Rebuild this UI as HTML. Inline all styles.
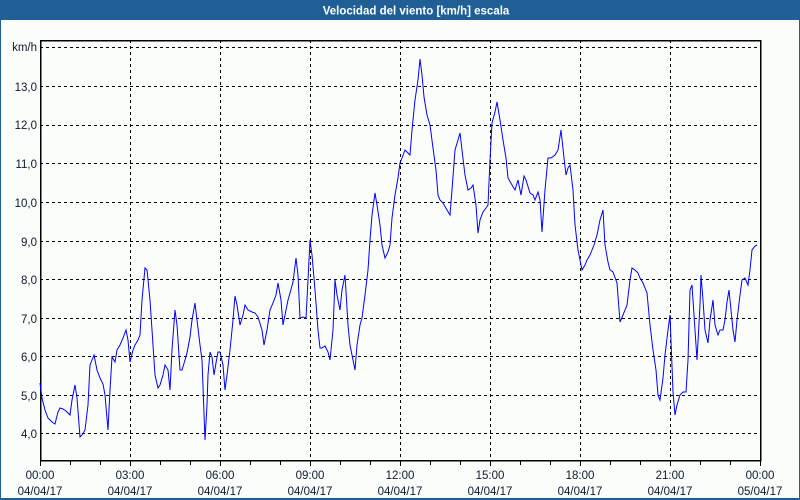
<!DOCTYPE html>
<html><head><meta charset="utf-8"><style>
html,body{margin:0;padding:0;width:800px;height:500px;overflow:hidden;background:#fbfdfb}
svg{display:block}
text{font-family:"Liberation Sans","DejaVu Sans",sans-serif;font-size:11.5px;fill:#101830}
</style></head><body>
<svg width="800" height="500" viewBox="0 0 800 500" xmlns="http://www.w3.org/2000/svg">
<rect x="0" y="0" width="800" height="500" fill="#fbfdfb"/>
<rect x="0" y="0" width="800" height="20" fill="#1f5f96"/>
<rect x="0" y="0" width="1" height="500" fill="#1f5f96"/>
<rect x="799" y="0" width="1" height="500" fill="#1f5f96"/>
<rect x="0" y="498" width="800" height="2" fill="#1f5f96"/>
<text x="416" y="14.5" text-anchor="middle" style="fill:#fff;font-weight:bold;font-size:11.5px">Velocidad del viento [km/h] escala</text>
<g stroke="#000" stroke-width="1" stroke-dasharray="3,3" fill="none" shape-rendering="crispEdges">
<path d="M40 47.5H760M40 86.5H760M40 125.5H760M40 163.5H760M40 202.5H760M40 241.5H760M40 279.5H760M40 318.5H760M40 356.5H760M40 395.5H760M40 433.5H760"/>
<path d="M130.5 40V460M220.5 40V460M310.5 40V460M400.5 40V460M490.5 40V460M580.5 40V460M670.5 40V460"/>
</g>
<g stroke="#000" stroke-width="1" fill="none" shape-rendering="crispEdges">
<path d="M40.5 40.5H760.5V460.5H40.5Z" stroke-width="1.5"/>
<path d="M40.5 460V466M70.5 460V465M100.5 460V465M130.5 460V466M160.5 460V465M190.5 460V465M220.5 460V466M250.5 460V465M280.5 460V465M310.5 460V466M340.5 460V465M370.5 460V465M400.5 460V466M430.5 460V465M460.5 460V465M490.5 460V466M520.5 460V465M550.5 460V465M580.5 460V466M610.5 460V465M640.5 460V465M670.5 460V466M700.5 460V465M730.5 460V465M760.5 460V466"/>
</g>
<g text-anchor="end">
<text x="37" y="51">km/h</text>
<text x="37" y="91">13,0</text><text x="37" y="129">12,0</text><text x="37" y="168">11,0</text>
<text x="37" y="207">10,0</text><text x="37" y="246">9,0</text><text x="37" y="284">8,0</text>
<text x="37" y="323">7,0</text><text x="37" y="361">6,0</text><text x="37" y="400">5,0</text><text x="37" y="438">4,0</text>
</g>
<g text-anchor="middle">
<text x="40" y="479">00:00</text><text x="40" y="495">04/04/17</text>
<text x="130" y="479">03:00</text><text x="130" y="495">04/04/17</text>
<text x="220" y="479">06:00</text><text x="220" y="495">04/04/17</text>
<text x="310" y="479">09:00</text><text x="310" y="495">04/04/17</text>
<text x="400" y="479">12:00</text><text x="400" y="495">04/04/17</text>
<text x="490" y="479">15:00</text><text x="490" y="495">04/04/17</text>
<text x="580" y="479">18:00</text><text x="580" y="495">04/04/17</text>
<text x="670" y="479">21:00</text><text x="670" y="495">04/04/17</text>
<text x="760" y="479">00:00</text><text x="760" y="495">05/04/17</text>
</g>
<polyline fill="none" stroke="#0000ff" stroke-width="1" points="40,383 42,398 45,410 48,418 52,422 55,424 58,412 60,408 63,409 66,411 70,415 72,400 75,385 77,398 80,437 82,435 85,430 88,405 90,365 92,360 94,355 97,370 100,378 103,384 105,395 108,430 110,390 112,357 115,362 117,350 120,345 123,338 126,330 128,340 130,362 133,350 135,345 138,340 140,335 142,300 145,268 147,270 150,300 152,330 155,375 158,388 160,385 163,375 165,365 168,370 170,390 172,350 175,310 177,325 180,370 182,370 185,360 187,353 190,337 192,320 195,303 197,320 200,345 202,360 205,440 207,405 208,375 210,352 212,357 214,375 216,363 218,352 220,352 223,365 225,390 227,375 230,350 233,320 235,296 237,305 240,325 243,315 245,305 248,310 252,312 255,313 258,317 262,330 264,345 267,330 270,310 273,303 276,295 278,283 281,300 283,325 285,315 288,300 290,293 293,282 296,258 298,275 300,318 303,317 306,318 308,280 310,240 312,255 315,290 318,330 320,348 322,348 325,346 328,352 330,360 333,330 335,280 337,295 340,310 342,290 345,275 348,325 350,345 353,360 355,370 357,345 360,325 362,318 365,295 368,270 370,240 372,215 375,193 377,205 380,225 382,245 385,258 388,252 390,245 392,218 395,195 398,178 400,163 402,158 405,150 408,153 410,155 412,130 415,100 418,80 420,59 422,75 424,97 427,115 430,125 433,148 436,170 438,195 440,200 443,203 447,210 450,215 452,190 455,150 458,140 460,133 462,150 465,175 468,190 471,188 473,185 476,205 478,233 480,220 483,212 486,208 488,205 490,160 492,123 495,112 497,102 500,120 503,140 506,158 508,178 512,185 515,190 518,180 521,195 524,176 526,180 530,193 533,195 535,200 538,192 540,200 542,232 545,190 548,158 551,158 555,155 558,150 561,130 564,158 566,175 568,168 570,165 573,190 575,225 578,250 582,270 585,265 587,260 590,255 594,245 597,235 600,220 603,210 605,245 608,262 610,270 613,272 617,283 620,322 623,315 627,305 630,280 632,268 635,270 638,273 640,278 643,283 647,293 650,325 653,350 656,370 658,395 660,400 663,378 665,355 668,330 670,315 673,392 675,415 677,405 680,395 683,392 686,392 688,360 690,290 692,285 695,330 697,360 700,305 701,275 703,300 705,330 708,343 710,320 713,300 715,325 718,335 720,330 723,330 725,320 727,302 729,290 731,310 733,330 735,342 737,320 740,295 742,280 745,278 748,285 750,270 752,250 755,246 757,245"/>
</svg>
</body></html>
